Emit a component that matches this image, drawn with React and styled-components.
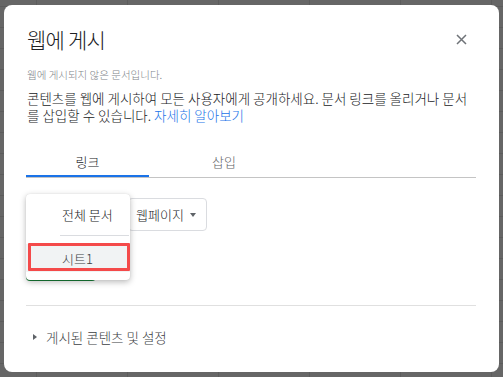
import React from 'react';
import styled, { createGlobalStyle } from 'styled-components';

const GlobalStyle = createGlobalStyle`
  html, body {
    margin: 0;
    padding: 0;
  }
  body {
    height: 377px;
    overflow: hidden;
    background-color: #666666;
    background-image:
      linear-gradient(to right, #5c5c5c 1px, transparent 1px),
      linear-gradient(to bottom, #5c5c5c 1px, transparent 1px);
    background-size: 91px 21px;
    background-position: 36px 6px;
    font-family: "Noto Sans CJK KR", "Noto Sans", sans-serif;
  }
`;

const Page = styled.div`
  padding: 5px 4px;
`;

const Dialog = styled.div`
  width: 495px;
  height: 367px;
  box-sizing: border-box;
  background: #fff;
  border-radius: 8px;
  padding: 20px 23px 0 22px;
  display: flex;
  flex-direction: column;
`;

const Header = styled.div`
  display: flex;
  align-items: center;
  justify-content: space-between;
  height: 28px;
`;

const Title = styled.h1`
  margin: 0 0 0 1px;
  font-size: 21px;
  font-weight: 300;
  letter-spacing: -0.8px;
  color: #202124;
  line-height: 28px;
`;

const CloseButton = styled.button`
  width: 24px;
  height: 24px;
  margin-right: 3px;
  border: 0;
  background: transparent;
  padding: 0;
  display: flex;
  align-items: center;
  justify-content: center;
  cursor: pointer;
`;

const Status = styled.div`
  margin: 14px 0 0 1px;
  font-size: 10.5px;
  font-weight: 300;
  line-height: 16px;
  color: #80868b;
`;

const Description = styled.p`
  margin: 7px 0 0 1px;
  font-size: 13.5px;
  font-weight: 300;
  line-height: 17px;
  word-break: break-all;
  color: #202124;
`;

const Link = styled.a`
  color: #1a73e8;
  text-decoration: none;
`;

const TabBar = styled.div`
  display: flex;
  margin-top: 23px;
  border-bottom: 1px solid #c4c4c4;
`;

const Tab = styled.div`
  width: ${p => p.width}px;
  height: 30px;
  box-sizing: border-box;
  display: flex;
  align-items: center;
  justify-content: center;
  font-size: 13px;
  font-weight: 300;
  color: ${p => (p.active ? '#202124' : '#5f6368')};
  border-bottom: 2px solid ${p => (p.active ? '#1a73e8' : 'transparent')};
`;

const SelectRow = styled.div`
  position: relative;
  display: flex;
  gap: 6px;
  margin-top: 20px;
`;

const Select = styled.div`
  width: ${p => p.width}px;
  height: 33px;
  box-sizing: border-box;
  border: 1px solid #dadce0;
  border-radius: 4px;
  display: flex;
  align-items: center;
  padding-left: 7px;
  gap: 6px;
  font-size: 13px;
  font-weight: 300;
  color: #202124;
`;

const Caret = styled.span`
  width: 0;
  height: 0;
  border-left: 3.5px solid transparent;
  border-right: 3.5px solid transparent;
  border-top: 4px solid #5f6368;
`;

const Menu = styled.div`
  position: absolute;
  left: 0;
  top: -4px;
  width: 104px;
  padding: 6px 0 8px;
  background: #fff;
  border-radius: 4px;
  box-shadow: 0 2px 6px rgba(0, 0, 0, 0.28), 0 0 1px rgba(0, 0, 0, 0.15);
  z-index: 2;
`;

const MenuItem = styled.div`
  position: relative;
  height: 28px;
  display: flex;
  align-items: center;
  padding-left: 36px;
  font-size: 13px;
  font-weight: 300;
  color: ${p => (p.active ? '#3c4043' : '#202124')};
  background: ${p => (p.active ? '#f1f3f4' : 'transparent')};
`;

const MenuDivider = styled.div`
  height: 1px;
  background: #dadce0;
  margin: 7px 1px 8px 34px;
`;

const Marker = styled.div`
  position: absolute;
  left: 2px;
  right: 0;
  top: -1px;
  bottom: 1px;
  border: 3px solid #f44a4a;
  border-radius: 1px;
`;

const PublishButton = styled.button`
  margin-top: 17px;
  width: 70px;
  height: 33px;
  border: 0;
  border-radius: 4px;
  background: #188038;
  color: #fff;
  font-family: inherit;
  font-size: 13px;
`;

const Divider = styled.hr`
  margin: 24px 0 0 0;
  border: 0;
  height: 1px;
  background: #e0e0e0;
`;

const Disclosure = styled.div`
  margin: 21px 0 0 7px;
  display: flex;
  align-items: center;
  gap: 9px;
  height: 20px;
  font-size: 13.5px;
  font-weight: 300;
  color: #3c4043;
`;

const Triangle = styled.span`
  width: 0;
  height: 0;
  border-top: 3.5px solid transparent;
  border-bottom: 3.5px solid transparent;
  border-left: 4px solid #5f6368;
`;

export default function App() {
  return (
    <Page>
      <GlobalStyle />
      <Dialog>
        <Header>
          <Title>웹에 게시</Title>
          <CloseButton aria-label="닫기">
            <svg width="11" height="11" viewBox="0 0 11 11">
              <path d="M1 1 L10 10 M10 1 L1 10" stroke="#6f7378" strokeWidth="1.5" />
            </svg>
          </CloseButton>
        </Header>
        <Status>웹에 게시되지 않은 문서입니다.</Status>
        <Description>
          콘텐츠를 웹에 게시하여 모든 사용자에게 공개하세요. 문서 링크를 올리거나 문서를 삽입할 수 있습니다.{' '}
          <Link href="#">자세히 알아보기</Link>
        </Description>
        <TabBar>
          <Tab width={123} active>링크</Tab>
          <Tab width={150}>삽입</Tab>
        </TabBar>
        <SelectRow>
          <Select width={96}>전체 문서<Caret /></Select>
          <Select width={79}>웹페이지<Caret /></Select>
          <Menu>
            <MenuItem>전체 문서</MenuItem>
            <MenuDivider />
            <MenuItem active>
              시트1
              <Marker />
            </MenuItem>
          </Menu>
        </SelectRow>
        <PublishButton>게시</PublishButton>
        <Divider />
        <Disclosure>
          <Triangle />
          게시된 콘텐츠 및 설정
        </Disclosure>
      </Dialog>
    </Page>
  );
}
